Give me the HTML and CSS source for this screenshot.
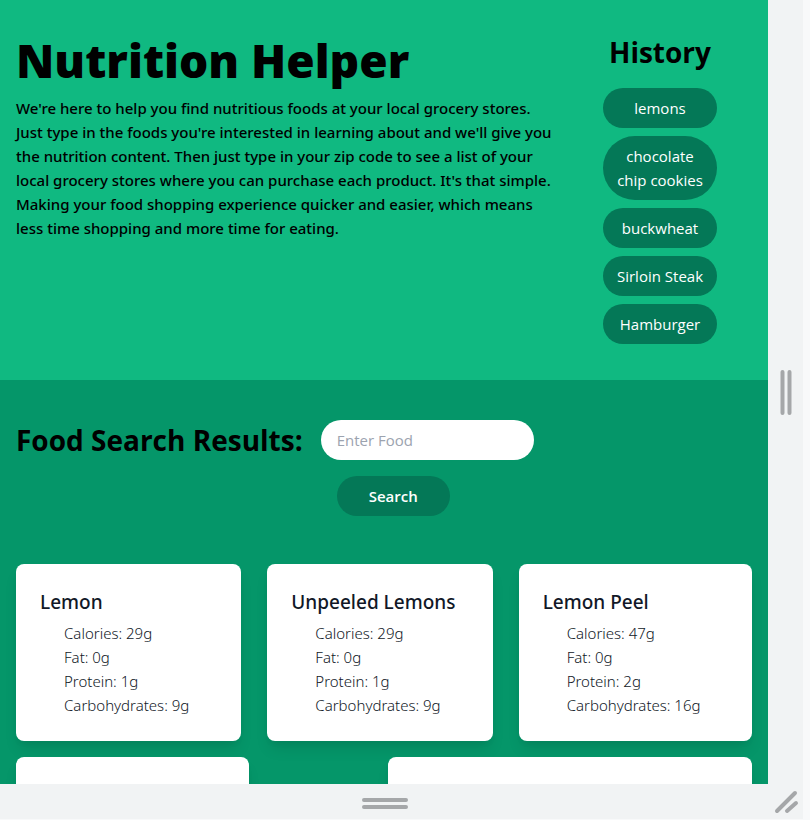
FILE: index.html
```html
<!DOCTYPE html>
<html lang="en">
<head>
<meta charset="utf-8">
<meta name="viewport" content="width=device-width, initial-scale=1">
<title>Nutrition Helper</title>
<link rel="stylesheet" href="styles.css">
</head>
<body>
<div class="frame">
  <div class="viewport">
    <header class="hero">
      <div class="intro">
        <h1 class="title">Nutrition Helper</h1>
        <p class="lead">We're here to help you find nutritious foods at your local grocery stores. Just type in the foods you're interested in learning about and we'll give you the nutrition content. Then just type in your zip code to see a list of your local grocery stores where you can purchase each product. It's that simple. Making your food shopping experience quicker and easier, which means less time shopping and more time for eating.</p>
      </div>
      <aside class="history">
        <h2 class="heading">History</h2>
        <button class="pill" type="button">lemons</button>
        <button class="pill" type="button">chocolate chip cookies</button>
        <button class="pill" type="button">buckwheat</button>
        <button class="pill" type="button">Sirloin Steak</button>
        <button class="pill" type="button">Hamburger</button>
      </aside>
    </header>
    <main class="results">
      <form class="search">
        <h2 class="heading"><label for="food">Food Search Results:</label></h2>
        <div class="fields">
          <input class="food" id="food" type="text" placeholder="Enter Food">
          <button class="submit" type="button">Search</button>
        </div>
      </form>
      <div class="cards">
        <article class="card">
          <h3 class="name">Lemon</h3>
          <ul class="facts"><li>Calories: 29g</li><li>Fat: 0g</li><li>Protein: 1g</li><li>Carbohydrates: 9g</li></ul>
        </article>
        <article class="card">
          <h3 class="name">Unpeeled Lemons</h3>
          <ul class="facts"><li>Calories: 29g</li><li>Fat: 0g</li><li>Protein: 1g</li><li>Carbohydrates: 9g</li></ul>
        </article>
        <article class="card">
          <h3 class="name">Lemon Peel</h3>
          <ul class="facts"><li>Calories: 47g</li><li>Fat: 0g</li><li>Protein: 2g</li><li>Carbohydrates: 16g</li></ul>
        </article>
      </div>
      <div class="cards cards-wide">
        <article class="card"></article>
        <article class="card"></article>
      </div>
    </main>
  </div>
  <div class="gutter">
    <svg width="12" height="48" viewBox="0 0 12 48"><path d="M2.500 4v41M9.500 4v41"/></svg>
  </div>
  <div class="gutter">
    <svg width="48" height="12" viewBox="0 0 48 12"><path d="M4 4h42M4 11h42"/></svg>
  </div>
  <div class="gutter">
    <svg width="24" height="24" viewBox="0 0 24 24"><path d="M3 21L21 3M13 21L22 13"/></svg>
  </div>
</div>
</body>
</html>
```
FILE: styles.css
```css
* { box-sizing: border-box; }

body {
  margin: 0;
  font-family: "Open Sans", "Noto Sans", sans-serif;
  font-size: 15px;
  line-height: 24px;
  color: #000;
  background: #f8f9fa;
}

h1, h2, h3, p, ul { margin: 0; padding: 0; }
button, input { font: inherit; border: 0; }

.frame {
  display: grid;
  grid-template-columns: minmax(0, 1fr) 35px;
  grid-template-rows: minmax(0, 1fr) 35px;
  height: 100vh;
  padding: 0 7px 1px 0;
}

.viewport { overflow: hidden; background: #059669; }

.hero {
  display: flex;
  justify-content: space-between;
  padding: 32px 16px 36px;
  background: #10b981;
}

.intro { flex: 0 1 544px; }
.title { margin-bottom: 8px; font-size: 46px; line-height: 56px; font-weight: 800; }
.lead { font-family: "Noto Sans", sans-serif; font-weight: 500; }

.heading { font-size: 28px; line-height: 40px; font-weight: 700; }

.history {
  display: flex;
  flex-direction: column;
  gap: 8px;
  width: 114px;
  margin-right: 35px;
}
.history .heading { margin-bottom: 8px; text-align: center; }

.pill {
  padding: 8px 12px;
  border-radius: 32px;
  background: #047857;
  color: #fff;
}

.results { padding: 40px 16px 16px; }

.search { display: flex; gap: 18px; margin-bottom: 48px; }

.fields {
  display: flex;
  flex-direction: column;
  align-items: flex-start;
  gap: 16px;
}
.food {
  width: 213px;
  height: 40px;
  padding: 8px 16px;
  border-radius: 20px;
  background: #fff;
}
.food::placeholder { color: #9ca3af; opacity: 1; }
.submit {
  margin-left: 16px;
  padding: 8px 32px;
  border-radius: 20px;
  background: #047857;
  color: #fff;
  font-weight: 600;
}

.cards {
  display: grid;
  grid-template-columns: 225fr 225fr 233fr;
  gap: 26px;
  margin-bottom: 16px;
}
.cards-wide { grid-template-columns: 233fr 364fr; gap: 139px; }

.card {
  min-height: 177px;
  padding: 24px;
  border-radius: 8px;
  background: #fff;
  color: #111827;
  box-shadow: 0 10px 15px -3px rgba(0, 0, 0, 0.1), 0 4px 6px -2px rgba(0, 0, 0, 0.05);
}
.name { margin-bottom: 5px; font-family: "Noto Sans", sans-serif; font-size: 19px; line-height: 28px; font-weight: 500; }
.facts { padding-left: 24px; list-style: none; font-family: "Noto Sans", sans-serif; font-weight: 300; }

.gutter {
  display: flex;
  align-items: center;
  justify-content: center;
  background: #f1f3f4;
}
.gutter svg { fill: none; stroke: #a5a7a9; stroke-width: 4; stroke-linecap: round; overflow: visible; }
```
